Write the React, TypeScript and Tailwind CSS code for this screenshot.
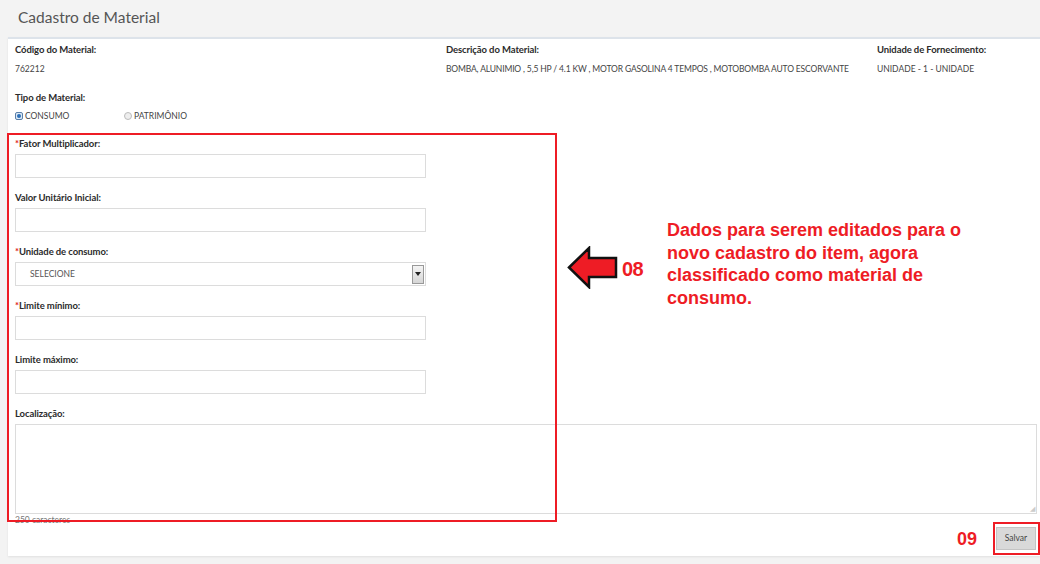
const font = { fontFamily: 'Lato, "Open Sans", sans-serif' }
const arial = { fontFamily: '"Liberation Sans", Arial, sans-serif' }

function Label({ text, required }: { text: string; required?: boolean }) {
  return (
    <div className="text-[9.5px] font-bold text-[#2b2b2b] leading-[12px] h-[12px] tracking-[-0.1px]">
      {required && <span className="text-[#e02020]">*</span>}
      {text}
    </div>
  )
}

function Field({ label, required }: { label: string; required?: boolean }) {
  return (
    <div className="flex flex-col gap-[4px]">
      <Label text={label} required={required} />
      <div className="w-[411px] h-[24px] border border-[#dcdcdc] bg-white" />
    </div>
  )
}

function Radio({ checked, label }: { checked?: boolean; label: string }) {
  return (
    <div className="flex items-center gap-[2px] text-[8.5px] leading-[12px] text-[#444]">
      <span
        className={
          checked
            ? 'w-[8px] h-[8px] rounded-[2px] border border-[#5a7fa8] bg-[#dbe8f5] flex items-center justify-center'
            : 'w-[8px] h-[8px] rounded-full border border-[#bbb] bg-[#eee]'
        }
      >
        {checked && <span className="w-[4px] h-[4px] rounded-full bg-[#2c6fb8]" />}
      </span>
      <span>{label}</span>
    </div>
  )
}

export default function App() {
  return (
    <div className="relative w-[1040px] h-[564px] bg-[#f3f3f3] overflow-hidden" style={font}>
      <div className="h-[37px] flex items-center pl-[18px] pb-[2px] text-[15.5px] text-[#555]">Cadastro de Material</div>
      <div className="ml-[8px] h-[519px] bg-white border-t-2 border-[#dde3ea] shadow-[0_1px_2px_rgba(0,0,0,0.08)] pl-[7px] pt-[5px]">
        <div className="flex">
          <div className="w-[431px] flex flex-col gap-[7px]">
            <Label text="Código do Material:" />
            <div className="text-[8.5px] leading-[13px] text-[#444]">762212</div>
          </div>
          <div className="w-[431px] flex flex-col gap-[7px]">
            <Label text="Descrição do Material:" />
            <div className="text-[8.5px] leading-[13px] text-[#444] whitespace-nowrap tracking-[-0.15px]">
              BOMBA, ALUNIMIO , 5,5 HP / 4.1 KW , MOTOR GASOLINA 4 TEMPOS , MOTOBOMBA AUTO ESCORVANTE
            </div>
          </div>
          <div className="flex flex-col gap-[7px]">
            <Label text="Unidade de Fornecimento:" />
            <div className="text-[8.5px] leading-[13px] text-[#444]">UNIDADE - 1 - UNIDADE</div>
          </div>
        </div>

        <div className="mt-[16px] flex flex-col gap-[6px]">
          <Label text="Tipo de Material:" />
          <div className="flex">
            <div className="w-[109px]">
              <Radio checked label="CONSUMO" />
            </div>
            <Radio label="PATRIMÔNIO" />
          </div>
        </div>

        <div className="mt-[16px] flex flex-col gap-[14px]">
          <Field label="Fator Multiplicador:" required />
          <Field label="Valor Unitário Inicial:" />
          <div className="flex flex-col gap-[4px]">
            <Label text="Unidade de consumo:" required />
            <div className="w-[411px] h-[24px] border border-[#dcdcdc] bg-white flex items-center justify-between pl-[14px] pr-[1px]">
              <span className="text-[8.5px] text-[#555]">SELECIONE</span>
              <span className="w-[12px] h-[19px] border border-[#999] bg-gradient-to-b from-[#f4f4f4] to-[#d6d6d6] flex items-center justify-center">
                <span className="w-0 h-0 border-l-[3px] border-r-[3px] border-t-[4px] border-l-transparent border-r-transparent border-t-[#222]" />
              </span>
            </div>
          </div>
          <Field label="Limite mínimo:" required />
          <Field label="Limite máximo:" />
          <div className="flex flex-col gap-[4px]">
            <Label text="Localização:" />
            <div className="relative w-[1022px] h-[90px] border border-[#dcdcdc] bg-white">
              <span className="absolute right-[1px] bottom-[1px] text-[7px] leading-none text-[#ccc]">◢</span>
            </div>
          </div>
        </div>
        <div className="flex items-start justify-between pr-[4px]">
          <span className="text-[8.5px] leading-[12px] text-[#777]">250 caracteres</span>
          <button className="mt-[13px] w-[40px] h-[23px] bg-[#d9d9d9] border border-[#c4c4c4] text-[8.5px] text-[#444]">Salvar</button>
        </div>
      </div>

      {/* annotations */}
      <div className="absolute left-[7px] top-[133px] w-[550px] h-[389px] border-2 border-[#ee1c25]" />
      <div className="absolute left-[993px] top-[522px] w-[47px] h-[33px] border-2 border-[#ee1c25]" />
      <div className="absolute left-[957px] top-[526px] text-[18px] font-bold text-[#ee1c25]" style={arial}>09</div>
      <svg className="absolute left-[567px] top-[246px]" width="52" height="43" viewBox="0 0 52 43">
        <path d="M2 21.5 L22 2 L22 12 L49 12 L49 31 L22 31 L22 41 Z" fill="#ee1c25" stroke="#111" strokeWidth="2.5" strokeLinejoin="miter" />
      </svg>
      <div className="absolute left-[622px] top-[254px] text-[20px] font-bold text-[#ee1c25] tracking-[-0.5px]" style={arial}>08</div>
      <div className="absolute left-[667px] top-[219px] w-[340px] text-[18px] leading-[22.5px] font-bold text-[#ee1c25]" style={arial}>
        Dados para serem editados para o<br />novo cadastro do item, agora<br />classificado como material de<br />consumo.
      </div>
    </div>
  )
}
